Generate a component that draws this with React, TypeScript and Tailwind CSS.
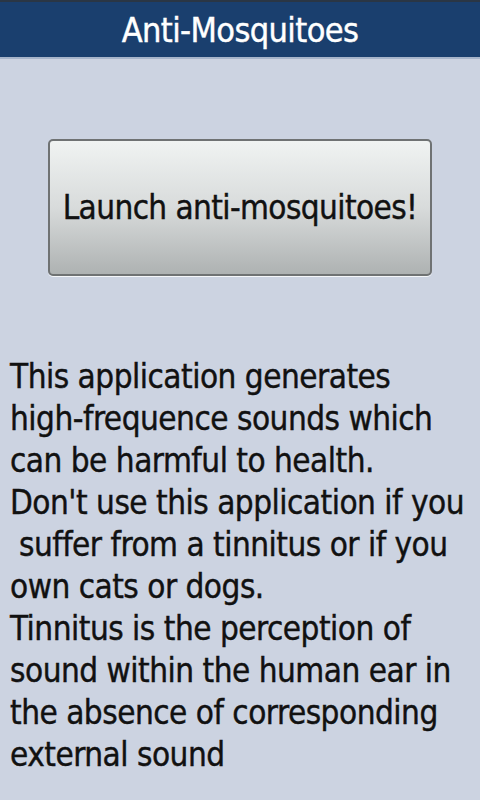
import React from "react";

export default function App() {
  return (
    <div
      className="w-[480px] h-[800px] bg-[#ccd3e1] flex flex-col overflow-hidden"
      style={{ fontFamily: '"DejaVu Sans Condensed", "DejaVu Sans", sans-serif' }}
    >
      <div className="h-[2px] bg-[#2a3645]" />
      <div className="h-[55px] bg-[#1a3f6e] flex items-center justify-center">
        <span className="text-white text-[34px] leading-none tracking-[-0.6px] [-webkit-text-stroke:0.4px_white]">Anti-Mosquitoes</span>
      </div>
      <div className="h-[2px] bg-[#a7b5cb]" />
      <div className="pt-[80px] px-[48px]">
        <button className="w-[384px] h-[137px] rounded-[5px] border-2 border-[#6f7273] bg-gradient-to-b from-[#f0f3f2] via-[#d8dbdb] to-[#aeb2b2] flex items-center justify-center shadow-[0_1px_0_#f4f6f9]">
          <span className="text-[#111] text-[33px] leading-none tracking-[-0.6px] [-webkit-text-stroke:0.4px_#111]">Launch anti-mosquitoes!</span>
        </button>
      </div>
      <div className="pt-[80px] pl-[10px] pr-[4px] text-[#111] text-[33px] leading-[42px] tracking-[-0.5px] [-webkit-text-stroke:0.4px_#111]">
        <div>This application generates</div>
        <div>high-frequence sounds which</div>
        <div>can be harmful to health.</div>
        <div>Don't use this application if you</div>
        <div className="whitespace-pre"> suffer from a tinnitus or if you</div>
        <div>own cats or dogs.</div>
        <div>Tinnitus is the perception of</div>
        <div>sound within the human ear in</div>
        <div>the absence of corresponding</div>
        <div>external sound</div>
      </div>
    </div>
  );
}
